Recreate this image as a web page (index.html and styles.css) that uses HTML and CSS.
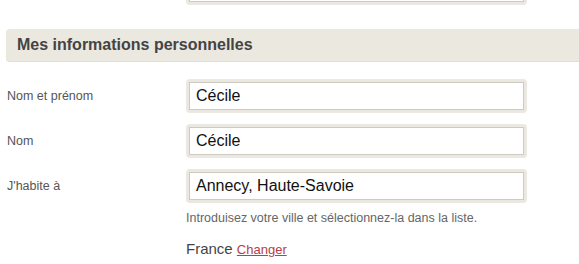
FILE: index.html
```html
<!DOCTYPE html>
<html lang="fr">
<head>
<meta charset="utf-8">
<title>Mes informations personnelles</title>
<link rel="stylesheet" href="styles.css">
</head>
<body>
<div class="prev-field"><div class="field-inner"></div></div>
<div class="section-head">Mes informations personnelles</div>
<div class="form">
  <div class="row">
    <label class="label">Nom et prénom</label>
    <div class="field"><div class="field-inner">Cécile</div></div>
  </div>
  <div class="row">
    <label class="label">Nom</label>
    <div class="field"><div class="field-inner">Cécile</div></div>
  </div>
  <div class="row">
    <label class="label">J'habite à</label>
    <div class="field"><div class="field-inner">Annecy, Haute-Savoie</div></div>
  </div>
  <div class="extra">
    <p class="help">Introduisez votre ville et sélectionnez-la dans la liste.</p>
    <p class="country">France <a href="#" class="change">Changer</a></p>
  </div>
</div>
</body>
</html>
```

FILE: styles.css
```css
html, body {
  margin: 0;
  padding: 0;
  background: #ffffff;
  font-family: "Liberation Sans", Arial, sans-serif;
  overflow: hidden;
}

.prev-field {
  margin: -29px 0 0 186px;
  width: 341px;
  height: 34px;
  box-sizing: border-box;
  border: 3px solid #ebe8e1;
  border-radius: 4px;
}

.field-inner {
  height: 100%;
  box-sizing: border-box;
  border: 1px solid #cdcac2;
  background: #fff;
  padding: 0 0 0 6px;
  display: flex;
  align-items: center;
  font-size: 16px;
  color: #111;
}

.section-head {
  margin: 24px 0 0 6px;
  height: 32px;
  background: #ebe8e0;
  border-radius: 4px 0 0 4px;
  box-shadow: 0 1px 0 #e2dfd7;
  padding-left: 11px;
  display: flex;
  align-items: center;
  font-size: 16px;
  font-weight: bold;
  color: #444444;
}

.form {
  padding-top: 18px;
  display: flex;
  flex-direction: column;
  gap: 11px;
}

.row {
  display: flex;
  align-items: center;
}

.label {
  width: 179px;
  padding-left: 7px;
  font-size: 12.5px;
  color: #555555;
}

.field {
  width: 341px;
  height: 34px;
  box-sizing: border-box;
  border: 3px solid #ebe8e1;
  border-radius: 4px;
}

.extra {
  padding-left: 186px;
  margin-top: -3px;
}

.help {
  margin: 0;
  font-size: 12.5px;
  color: #666666;
}

.country {
  margin: 15px 0 0;
  font-size: 15px;
  color: #444444;
}

.change {
  font-size: 13px;
  color: #b5404a;
  text-decoration: underline;
}
```
